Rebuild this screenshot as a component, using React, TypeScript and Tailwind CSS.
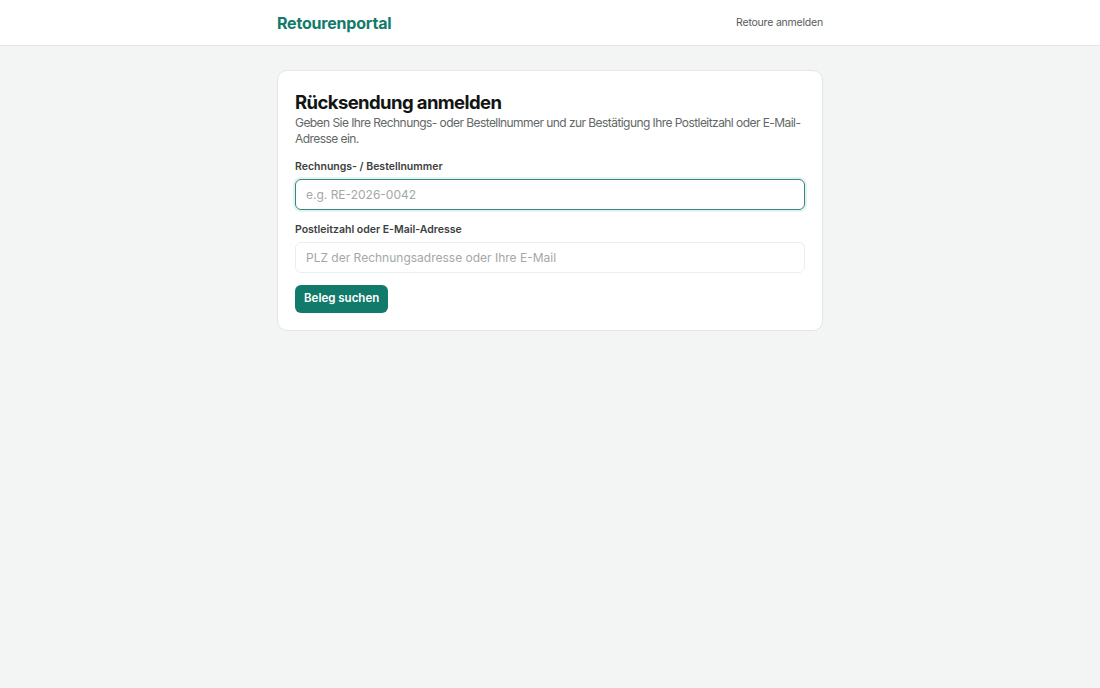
import { useState } from "react"

const App = () => {
    const [beleg, setBeleg] = useState("")
    const [plz, setPlz] = useState("")

    return (
        <div className="min-h-screen bg-[#f3f5f4] text-[#1a1d1c]" style={{ fontFamily: "Inter, 'Noto Sans', sans-serif" }}>
            <header className="h-[46px] bg-white border-b border-[#e4e6e5]">
                <div className="mx-auto w-[546px] h-full flex items-center justify-between">
                    <span className="text-[16px] font-bold text-[#127a6b] tracking-[-0.2px]">Retourenportal</span>
                    <a href="#" className="text-[10.5px] text-[#555b59] tracking-[-0.2px]">Retoure anmelden</a>
                </div>
            </header>

            <main className="mx-auto w-[546px] pt-6">
                <div className="bg-white border border-[#e4e6e5] rounded-[10px] px-[17px] pt-[18px] pb-[17px]">
                    <h1 className="text-[18.5px] leading-[26px] font-bold text-[#121514] tracking-[-0.6px]">Rücksendung anmelden</h1>
                    <p className="text-[12px] leading-[16px] text-[#626866] tracking-[-0.56px]">
                        Geben Sie Ihre Rechnungs- oder Bestellnummer und zur Bestätigung Ihre Postleitzahl oder E-Mail-Adresse ein.
                    </p>

                    <form onSubmit={(e) => e.preventDefault()} className="mt-[12px]">
                        <label htmlFor="beleg" className="block text-[10.5px] font-semibold text-[#3b403e] mb-[4px]">Rechnungs- / Bestellnummer</label>
                        <input
                            id="beleg"
                            type="text"
                            value={beleg}
                            onChange={(e) => setBeleg(e.target.value)}
                            placeholder="e.g. RE-2026-0042"
                            className="block w-full h-[31px] px-[10px] rounded-md border border-[#2d8a7c] ring-2 ring-[#127a6b]/10 text-[12px] placeholder:text-[#a3a8a6] focus:outline-0"
                        />

                        <label htmlFor="plz" className="block text-[10.5px] font-semibold text-[#3b403e] mt-[12px] mb-[4px]">Postleitzahl oder E-Mail-Adresse</label>
                        <input
                            id="plz"
                            type="text"
                            value={plz}
                            onChange={(e) => setPlz(e.target.value)}
                            placeholder="PLZ der Rechnungsadresse oder Ihre E-Mail"
                            className="block w-full h-[31px] px-[10px] rounded-md border border-[#eceeed] text-[12px] placeholder:text-[#a3a8a6] focus:outline-0"
                        />

                        <button type="submit" className="mt-[12px] h-[28px] px-[9px] rounded-md bg-[#127a6b] text-white text-[11.5px] font-semibold cursor-pointer">
                            Beleg suchen
                        </button>
                    </form>
                </div>
            </main>
        </div>
    )
}

export default App
